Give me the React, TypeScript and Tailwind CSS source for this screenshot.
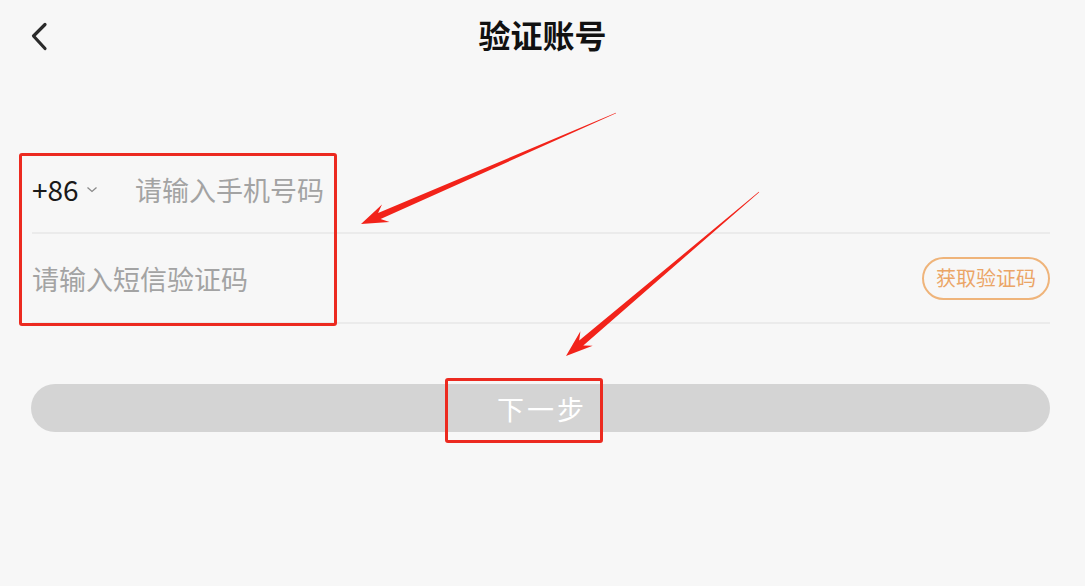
import React from "react";

type Pt = [number, number];

function arrowPoints(tail: Pt, tip: Pt): string {
  const dx = tip[0] - tail[0];
  const dy = tip[1] - tail[1];
  const len = Math.hypot(dx, dy);
  const ux = dx / len;
  const uy = dy / len;
  const nx = -uy;
  const ny = ux;
  const at = (back: number, side: number): Pt => [
    tip[0] - ux * back + nx * side,
    tip[1] - uy * back + ny * side,
  ];
  const pts: Pt[] = [
    at(len, 0.3),
    at(20, 3.2),
    at(27, 9.5),
    tip,
    at(27, -9.5),
    at(20, -3.2),
    at(len, -0.3),
  ];
  return pts.map((p) => `${p[0].toFixed(1)},${p[1].toFixed(1)}`).join(" ");
}

export default function App() {
  const font = { fontFamily: '"Noto Sans CJK SC", "Noto Sans", sans-serif' };
  return (
    <div
      className="relative w-[1085px] h-[586px] bg-[#f7f7f7] overflow-hidden"
      style={font}
    >
      {/* Header */}
      <div className="relative h-[68px] flex items-center justify-center">
        <svg
          className="absolute left-[26px] top-[18px]"
          width="30"
          height="38"
          viewBox="0 0 30 38"
        >
          <polyline
            points="19,6.5 7.5,18 19,30.5"
            fill="none"
            stroke="#2b2b2b"
            strokeWidth="3.2"
            strokeLinecap="round"
            strokeLinejoin="round"
          />
        </svg>
        <div className="text-[32px] font-bold text-[#111] leading-none">验证账号</div>
      </div>

      {/* Form */}
      <div className="mt-[78px] ml-[32px] mr-[35px]">
        <div className="h-[88px] flex items-center border-b-2 border-[#ebebeb]">
          <div className="flex items-center w-[103px]">
            <span className="text-[28px] text-[#1a1a1a] leading-none">+86</span>
            <svg className="ml-[7px] mt-[2px]" width="12" height="8" viewBox="0 0 12 8">
              <polyline
                points="1.5,1.5 6,5.5 10.5,1.5"
                fill="none"
                stroke="#8a8a8a"
                strokeWidth="1.3"
              />
            </svg>
          </div>
          <span className="text-[27px] text-[#a3a3a3] leading-none">请输入手机号码</span>
        </div>
        <div className="h-[90px] flex items-center justify-between border-b-2 border-[#ebebeb]">
          <span className="text-[27px] text-[#a3a3a3] leading-none">请输入短信验证码</span>
          <div className="w-[128px] h-[43px] rounded-full border-2 border-[#efb47a] flex items-center justify-center text-[20px] text-[#eba566] leading-none">
            获取验证码
          </div>
        </div>
      </div>

      <div className="mt-[60px] ml-[31px] mr-[35px] h-[48px] rounded-full bg-[#d4d4d4] flex items-center justify-center">
        <span className="text-[27px] text-white leading-none tracking-[3px] pl-[3px]">下一步</span>
      </div>

      {/* Annotations */}
      <div className="absolute left-[19px] top-[153px] w-[318px] h-[173px] border-[3px] border-[#ec2a20] rounded-[3px]" />
      <div className="absolute left-[445px] top-[378px] w-[158px] h-[65px] border-[3px] border-[#ec2a20] rounded-[3px]" />
      <svg className="absolute left-0 top-0" width="1085" height="586" viewBox="0 0 1085 586">
        <polygon points={arrowPoints([616, 113], [361, 224])} fill="#f2231a" />
        <polygon points={arrowPoints([759, 192], [566, 356])} fill="#f2231a" />
      </svg>
    </div>
  );
}
